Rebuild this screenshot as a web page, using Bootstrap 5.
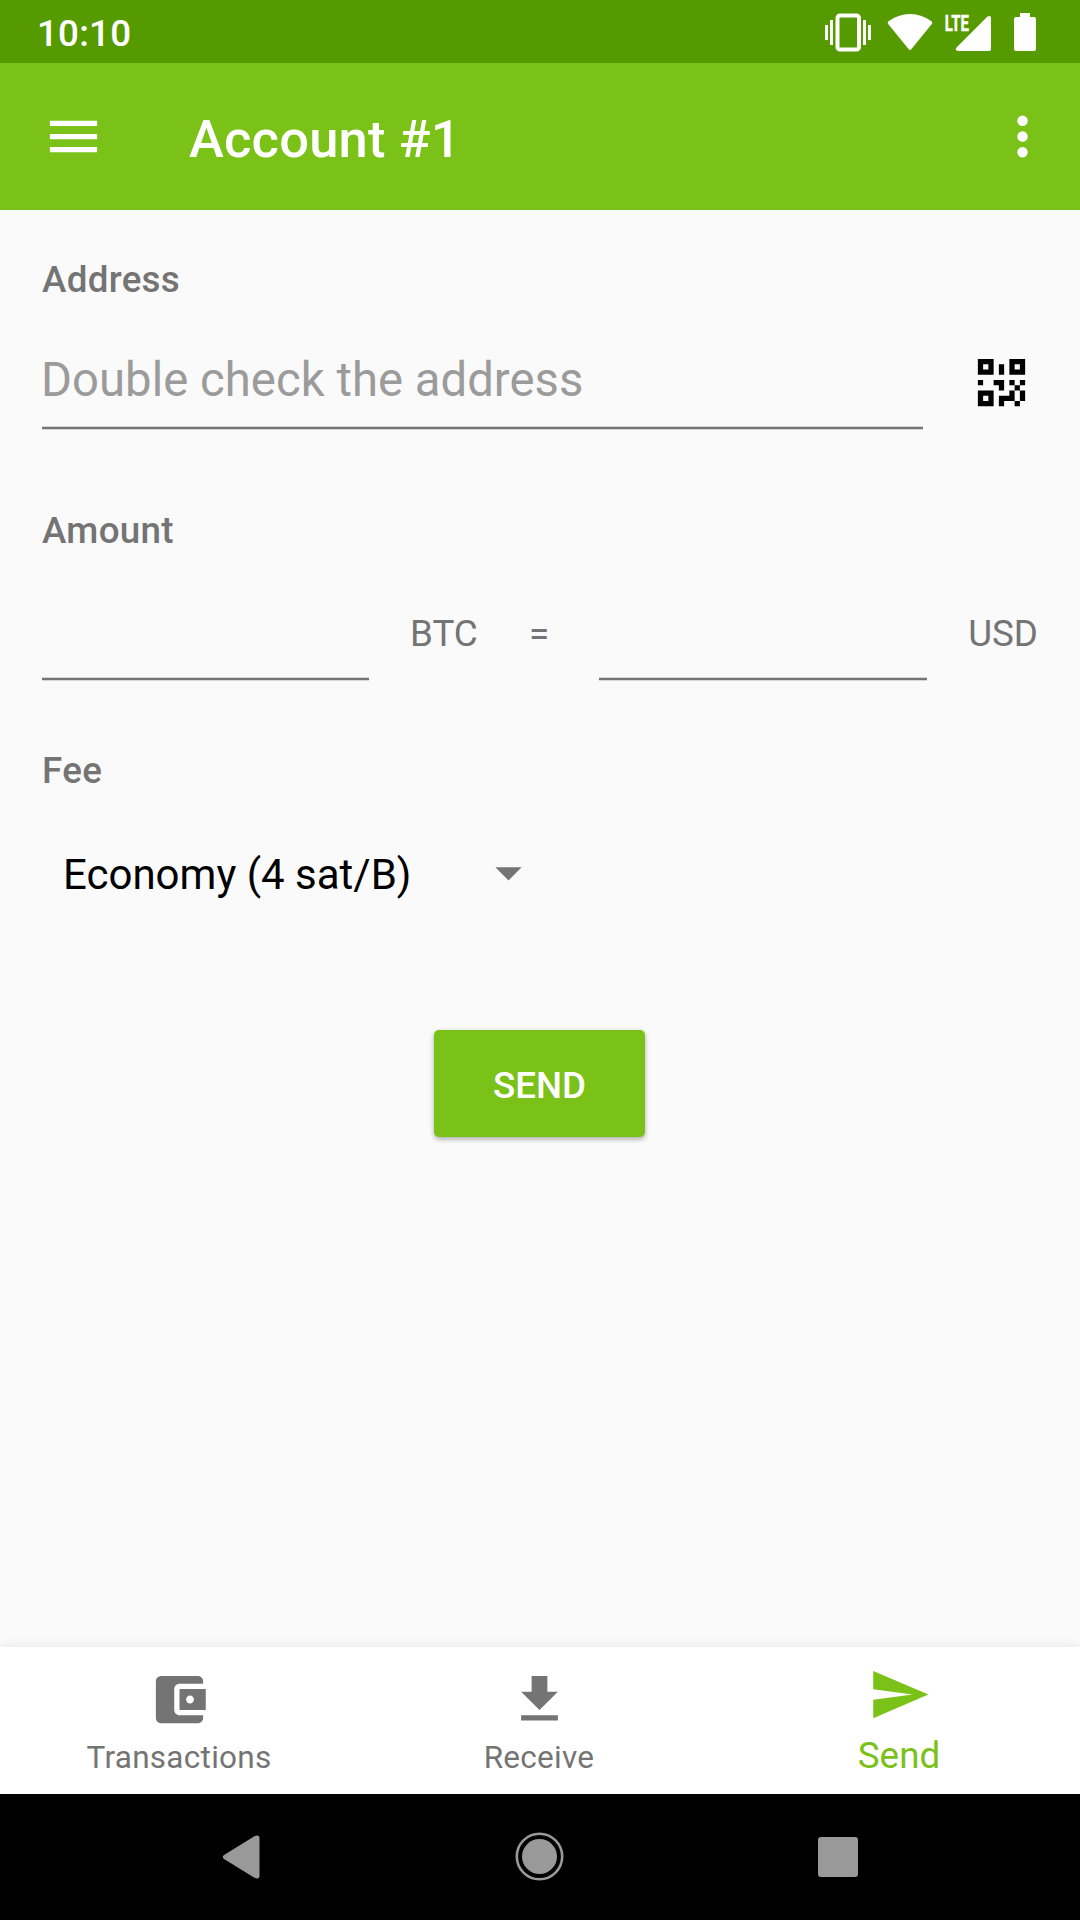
<!DOCTYPE html>
<html lang="en">
<head>
<meta charset="utf-8">
<meta name="viewport" content="width=device-width, initial-scale=1">
<title>Account #1</title>
<link href="https://cdn.jsdelivr.net/npm/bootstrap@5.3.0/dist/css/bootstrap.min.css" rel="stylesheet">
<style>
  :root { --brand: #7ac217; --brand-dark: #559b00; --ink-2: #747474; }
  body { font-family: Roboto, sans-serif; background: #fafafa; color: #000; line-height: 1.172; width: 1080px; height: 1920px; overflow: hidden; }
  svg { display: block; flex: none; }
  .ic { width: 63px; height: 63px; fill: currentColor; }
  .status-bar { height: 63px; background: var(--brand-dark); font-size: 36.75px; font-weight: 500; padding: 0 44px 0 37px; }
  .status-bar span { padding-top: 4px; letter-spacing: .2px; }
  .app-bar { height: 147px; background: var(--brand); padding: 0 26px 0 42px; }
  .app-title { font-size: 52.5px; font-weight: 500; margin-left: 84px; line-height: 1; padding-top: 5px; letter-spacing: .2px; }
  .form-area { padding: 48px 42px 0; color: var(--ink-2); }
  .field-label { font-size: 36.75px; line-height: 43px; font-weight: 500; margin: 0; letter-spacing: .3px; }
  .line-input, .line-input:focus { display: block; flex: none; border: 0; border-radius: 0; padding: 0; background: linear-gradient(#747474,#747474) 0 calc(100% - 1px)/100% 2px no-repeat, linear-gradient(#d6d6d6,#d6d6d6) 0 100%/100% 4px no-repeat; box-shadow: none; }
  .line-input::placeholder { color: #9b9b9b; opacity: 1; }
  .address-row { height: 129px; }
  .address-input, .address-input:focus { width: 881px; height: 129px; font-size: 47.25px; padding: 45px 0 16px; text-indent: -1px; letter-spacing: .03px; }
  .qr-icon { color: #000; margin: 50px 5px 0 0; }
  .amount-label { margin-top: 79px; }
  .amount-row { height: 129px; font-size: 36.75px; }
  .amount-row span { line-height: 43px; padding-top: 60px; }
  .amount-row .unit-btc { margin-left: 41px; width: 119px; }
  .amount-row .unit-eq { width: 70px; }
  .amount-input { height: 129px; width: 327px; font-size: 47.25px; }
  .amount-input.usd { width: 328px; }
  .fee-label { margin-top: 68px; }
  .fee-select { width: 498px; height: 63px; margin-top: 49px; padding-left: 21px; font-size: 42px; }
  .fee-select span { color: #000; padding-top: 5px; }
  .send-btn, .send-btn:hover { width: 211px; height: 107px; margin: 126px 1px 0 0; border: 0; border-radius: 5px; background: var(--brand); color: #fff; font-size: 36.75px; font-weight: 500; padding: 4px 0 0; box-shadow: 0 3px 5px rgba(0,0,0,.2), 0 1px 5px rgba(0,0,0,.12); }
  .tab-bar { height: 147px; background: #fff; color: var(--ink-2); font-size: 31.5px; box-shadow: 0 -1px 12px rgba(0,0,0,.08); }
  .tab-item { width: 360px; padding: 21px 2px 0 0; color: inherit; text-decoration: none; line-height: 37px; }
  .tab-item span { margin-top: 8px; letter-spacing: .28px; }
  .tab-item.active { color: var(--brand); font-size: 36.75px; padding-top: 16px; line-height: 43px; }
  .tab-item.active span { margin-top: 8px; letter-spacing: .1px; }
  .key-bar { height: 126px; background: #000; color: #999; padding: 0 222px; }
</style>
</head>
<body class="d-flex flex-column">
  <header class="text-white">
    <div class="status-bar d-flex align-items-center justify-content-between">
      <span>10:10</span>
      <svg width="212" height="62" viewBox="824 0 212 62" fill="#fff">
        <rect x="837.5" y="14.500" width="21.5" height="34" rx="2.5" fill="none" stroke="#fff" stroke-width="4"/>
        <path d="M825 24h3v15h-3zM830 19h3v25h-3zM863 19h3v25h-3zM868 24h3v15h-3z"/>
        <path d="M888.2 20.5Q898 13 910 13t21.800 7.500q1 1.200 0 2.500L911.500 48q-1.500 1.800-3 0L888.200 23q-1-1.300 0-2.500z"/>
        <path d="M991 17v31q0 2-2 2h-31q-4-.5-1-4l30.500-30.500q3.500-1.500 3.500 1.500z"/>
        <text x="944.800" y="30" font-size="22" font-weight="700" stroke="#fff" stroke-width=".5" textLength="24" lengthAdjust="spacingAndGlyphs" font-family="Roboto, sans-serif">LTE</text>
        <path d="M1020 12h10v4h4q2 0 2 2v30q0 2-2 2h-18q-2 0-2-2V18q0-2 2-2h4z"/>
      </svg>
    </div>
    <nav class="app-bar d-flex align-items-center">
      <svg class="ic" viewBox="0 0 24 24"><path d="M3 18h18v-2H3v2zm0-5h18v-2H3v2zm0-7v2h18V6H3z"/></svg>
      <h1 class="app-title mb-0">Account #1</h1>
      <svg class="ic ms-auto" viewBox="0 0 24 24"><path d="M12 8a2 2 0 1 0 0-4 2 2 0 0 0 0 4zm0 2a2 2 0 1 0 0 4 2 2 0 0 0 0-4zm0 6a2 2 0 1 0 0 4 2 2 0 0 0 0-4z"/></svg>
    </nav>
  </header>

  <main class="form-area flex-grow-1">
    <label class="field-label d-block" for="address">Address</label>
    <div class="address-row d-flex justify-content-between">
      <input id="address" class="form-control line-input address-input" placeholder="Double check the address">
      <svg class="ic qr-icon" viewBox="0 0 24 24">
        <path fill-rule="evenodd" d="M3 3h6v6H3zM5 5v2h2V5zM15 3h6v6h-6zM17 5v2h2V5zM3 15h6v6H3zM5 17v2h2v-2z"/>
        <path d="M11 5h2v4h-2zM3 11h2v2H3zM9 11h4v4h-2v-2H9zM15 11h2v2h-2zM19 11h2v2h-2zM17 13h2v2h-2zM15 15h2v4h-4v2h-2v-4h4zM19 15h2v4h-2zM17 19h2v2h-2z"/>
      </svg>
    </div>

    <label class="field-label amount-label d-block" for="btc">Amount</label>
    <div class="amount-row d-flex">
      <input id="btc" class="form-control line-input amount-input"><span class="unit-btc">BTC</span><span class="unit-eq">=</span>
      <input class="form-control line-input amount-input usd" aria-label="USD"><span class="ms-auto">USD</span>
    </div>

    <label class="field-label fee-label d-block">Fee</label>
    <div class="fee-select d-flex align-items-center justify-content-between">
      <span>Economy (4 sat/B)</span>
      <svg class="ic" viewBox="0 0 24 24"><path d="M7 10l5 5 5-5z"/></svg>
    </div>

    <div class="text-center"><button class="btn send-btn">SEND</button></div>
  </main>

  <nav class="tab-bar d-flex">
    <a class="tab-item d-flex flex-column align-items-center" href="#">
      <svg class="ic" viewBox="0 0 24 24"><path d="M21 18v1c0 1.100-.9 2-2 2H5c-1.110 0-2-.9-2-2V5c0-1.100.89-2 2-2h14c1.100 0 2 .9 2 2v1h-9c-1.110 0-2 .9-2 2v8c0 1.100.89 2 2 2h9zm-9-2h10V8H12v8zm4-2.500c-.83 0-1.500-.67-1.500-1.500s.67-1.500 1.500-1.500 1.500.67 1.500 1.500-.67 1.500-1.500 1.500z"/></svg>
      <span>Transactions</span>
    </a>
    <a class="tab-item d-flex flex-column align-items-center" href="#">
      <svg class="ic" viewBox="0 0 24 24"><path d="M19 9h-4V3H9v6H5l7 7 7-7zM5 18v2h14v-2H5z"/></svg>
      <span>Receive</span>
    </a>
    <a class="tab-item active d-flex flex-column align-items-center" href="#">
      <svg class="ic" viewBox="0 0 24 24"><path d="M2 21l21-9L2 3v7l15 2-15 2z"/></svg>
      <span>Send</span>
    </a>
  </nav>

  <footer class="key-bar d-flex align-items-center justify-content-between">
    <svg width="38" height="44" viewBox="0 0 38 44" fill="currentColor"><path d="M32 1.500q5.500-2.500 5.500 2v37q0 4.500-5.500 2L2 24q-2.500-2 0-4z"/></svg>
    <svg width="50" height="50" viewBox="0 0 50 50"><circle cx="25.500" cy="24.500" r="22.700" fill="none" stroke="currentColor" stroke-width="2.600"/><circle cx="25.500" cy="24.500" r="17.500" fill="currentColor"/></svg>
    <svg width="40" height="40" viewBox="0 0 40 40"><rect width="40" height="40" rx="3" fill="currentColor"/></svg>
  </footer>
<script src="https://cdn.jsdelivr.net/npm/bootstrap@5.3.0/dist/js/bootstrap.bundle.min.js"></script>
</body>
</html>
